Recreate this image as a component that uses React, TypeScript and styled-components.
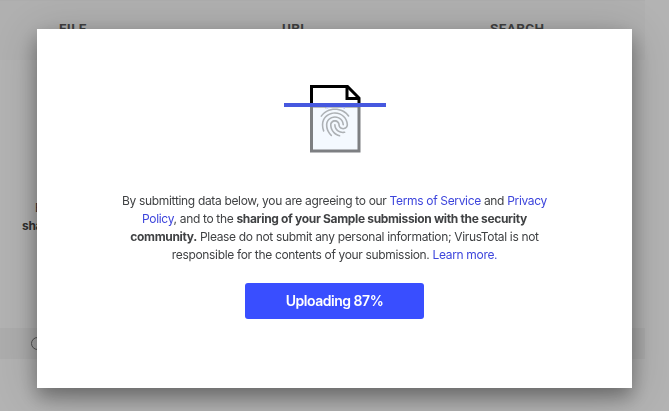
import React from "react";
import styled, { createGlobalStyle } from "styled-components";
import { MdFingerprint } from "react-icons/md";

const GlobalStyle = createGlobalStyle`
  * { box-sizing: border-box; }
  body { margin: 0; overflow: hidden; background: #b3b3b3; }
`;

const Page = styled.div`
  width: 669px;
  height: 411px;
  overflow: hidden;
  font-family: Inter, "Open Sans", sans-serif;
  color: #303030;
`;

const Panel = styled.div`
  width: 645px;
  display: flex;
  flex-direction: column;
`;

const Tabs = styled.nav`
  height: 60px;
  display: grid;
  grid-template-columns: 187px 213px 245px;
  background: #b0b0b0;
  border-top: 1px solid #adadad;
`;

const Tab = styled.div<{ $indent: number }>`
  padding: 18px 0 0 ${(p) => p.$indent}px;
  font: 700 13.5px/18px Roboto, sans-serif;
  letter-spacing: 0.4px;
  color: #404040;
`;

const Notice = styled.div`
  height: 268px;
  padding: 139px 0 0 22px;
  font-size: 12px;
  line-height: 18px;
  letter-spacing: -0.33px;
`;

const NoticeLine = styled.div<{ $indent?: number }>`
  padding-left: ${(p) => p.$indent ?? 0}px;
`;

const Footer = styled.div`
  height: 31px;
  display: flex;
  align-items: center;
  padding-left: 31px;
  background: #adadad;
`;

const InfoCircle = styled.span`
  width: 13px;
  height: 13px;
  border: 1px solid #555;
  border-radius: 50%;
`;

const Overlay = styled.div`
  position: fixed;
  top: 0;
  left: 0;
  width: 669px;
  padding: 29px 37px;
`;

const Dialog = styled.section`
  height: 359px;
  display: flex;
  flex-direction: column;
  align-items: center;
  padding-top: 55px;
  background: #fff;
  box-shadow: 0 6px 40px rgba(0, 0, 0, 0.2), 0 9px 18px rgba(0, 0, 0, 0.32);
`;

const Scan = styled.svg`
  display: block;
  width: 105px;
  height: 70px;
`;

const Terms = styled.p`
  margin: 38px 0 0;
  display: flex;
  flex-direction: column;
  align-items: center;
  font-size: 12px;
  line-height: 18px;
  letter-spacing: -0.33px;
  color: #404244;
`;

const Line = styled.span`
  white-space: nowrap;
`;

const Strong = styled.b`
  font-weight: 700;
`;

const Link = styled.a`
  color: #3d45dc;
`;

const Button = styled.button`
  width: 179px;
  height: 36px;
  margin-top: 19px;
  border: 0;
  border-radius: 3px;
  background: #394eff;
  color: #fff;
  font: 600 14px/20px Inter, sans-serif;
  letter-spacing: -0.48px;
`;

export default function App() {
  return (
    <Page>
      <GlobalStyle />
      <Panel>
        <Tabs>
          <Tab $indent={59}>FILE</Tab>
          <Tab $indent={95}>URL</Tab>
          <Tab $indent={90}>SEARCH</Tab>
        </Tabs>
        <Notice>
          <NoticeLine $indent={13}>By</NoticeLine>
          <NoticeLine><b>sharing</b></NoticeLine>
        </Notice>
        <Footer><InfoCircle /></Footer>
      </Panel>
      <Overlay>
        <Dialog>
          <Scan viewBox="0 0 105 70">
            <path d="M29.5 22H77V67H29.5Z" fill="#f4f9ff" stroke="#7d7f82" strokeWidth="3" />
            <path d="M29.5 21V2.5H65.5L77 14V21" fill="#fff" stroke="#000" strokeWidth="3" />
            <path d="M65 2.5V14.500H77" fill="none" stroke="#000" strokeWidth="3" />
            <MdFingerprint x={33.7} y={17.3} size={38.5} color="#adb1b5" />
            <path d="M44.5 24Q54 19.5 63 24" fill="none" stroke="#b2b8ed" strokeWidth="1.5" />
            <path d="M2 21H104" stroke="#4658df" strokeWidth="4" />
          </Scan>
          <Terms>
            <Line>
              By submitting data below, you are agreeing to our <Link>Terms of Service</Link> and <Link>Privacy</Link>
            </Line>
            <Line>
              <Link>Policy</Link>, and to the <Strong>sharing of your Sample submission with the security</Strong>
            </Line>
            <Line>
              <Strong>community.</Strong> Please do not submit any personal information; VirusTotal is not
            </Line>
            <Line>
              responsible for the contents of your submission. <Link>Learn more.</Link>
            </Line>
          </Terms>
          <Button>Uploading 87%</Button>
        </Dialog>
      </Overlay>
    </Page>
  );
}
